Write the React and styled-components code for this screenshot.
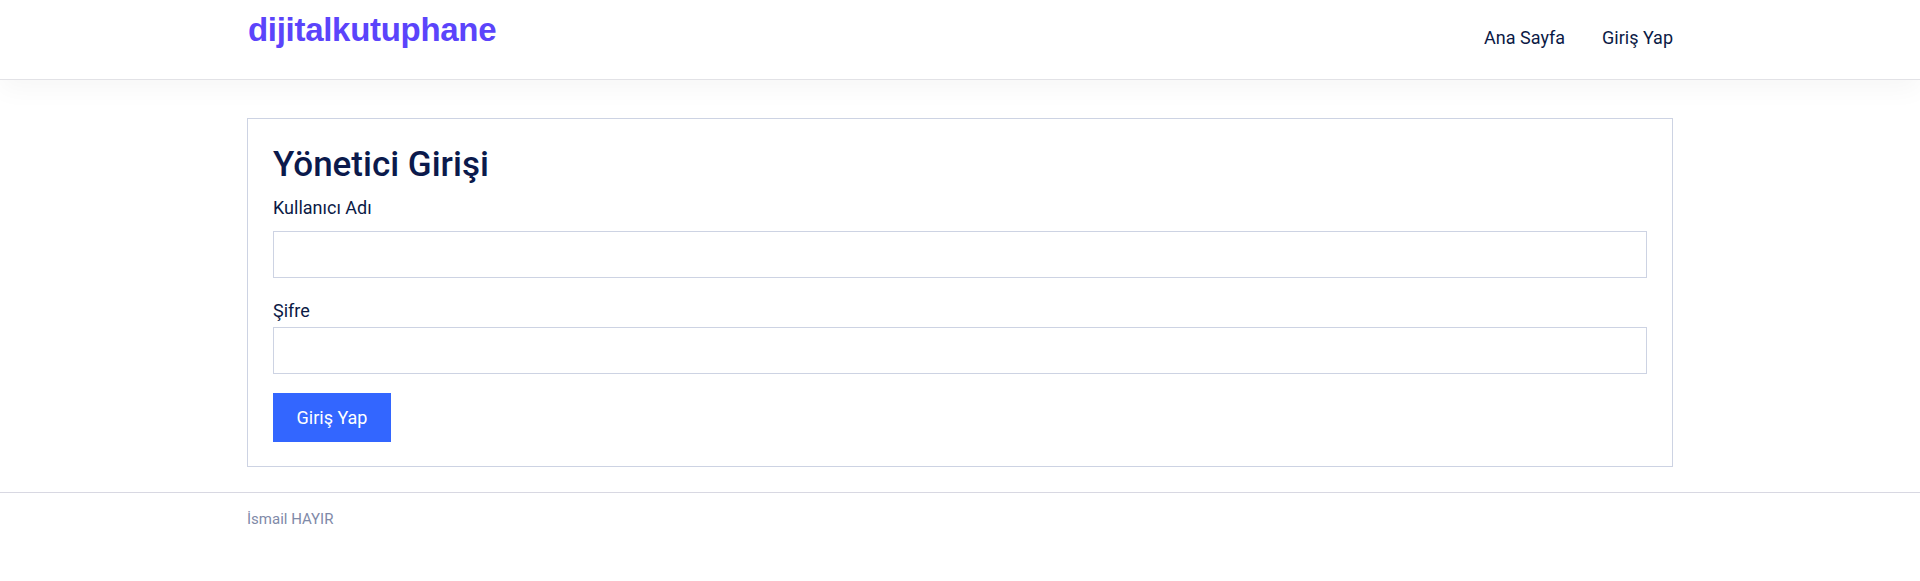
import styled, { createGlobalStyle } from 'styled-components';

const GlobalStyle = createGlobalStyle`
  * { box-sizing: border-box; }
  body {
    margin: 0;
    background: #ffffff;
    font-family: Roboto, "Noto Sans", sans-serif;
    color: #0a1a4a;
  }
`;

const Header = styled.header`
  height: 80px;
  background: #ffffff;
  border-bottom: 1px solid #e2e2e6;
  box-shadow: 0 10px 26px rgba(0, 0, 0, 0.035);
  position: relative;
`;

const Container = styled.div`
  width: 1426px;
  margin: 0 auto;
`;

const HeaderInner = styled(Container)`
  height: 100%;
  display: flex;
  justify-content: space-between;
  align-items: flex-start;
`;

const Logo = styled.a`
  font-family: "Liberation Sans", Arial, sans-serif;
  font-weight: 700;
  font-size: 33px;
  letter-spacing: -0.3px;
  color: #5b44fb;
  text-decoration: none;
  margin-top: 11px;
  margin-left: 1px;
`;

const Nav = styled.nav`
  display: flex;
  gap: 37px;
  margin-top: 27px;
`;

const NavLink = styled.a`
  font-size: 18px;
  font-weight: 400;
  color: #0b1a45;
  text-decoration: none;
`;

const Main = styled.main`
  padding-top: 38px;
  padding-bottom: 25px;
`;

const Card = styled(Container)`
  border: 1px solid #cdd3e3;
  padding: 25px 25px 24px;
  background: #ffffff;
`;

const Title = styled.h1`
  margin: 0;
  font-size: 35px;
  font-weight: 500;
  line-height: 42px;
  color: #0b1a4c;
`;

const Field = styled.div`
  margin-top: ${(p) => p.$top}px;
`;

const Label = styled.label`
  display: block;
  font-size: 18px;
  line-height: 22px;
  color: #0b1a45;
  margin-bottom: ${(p) => p.$gap}px;
`;

const Input = styled.input`
  display: block;
  width: 100%;
  height: 47px;
  border: 1px solid #cdd3e3;
  background: #ffffff;
  outline: none;
`;

const Button = styled.button`
  margin-top: 19px;
  width: 118px;
  height: 49px;
  border: none;
  background: #3366ff;
  color: #ffffff;
  font-family: Roboto, sans-serif;
  font-size: 18px;
  cursor: pointer;
`;

const Footer = styled.footer`
  border-top: 1px solid #d8d8e2;
`;

const FooterText = styled.p`
  margin: 0;
  padding-top: 17px;
  font-size: 15px;
  color: #7f8aa8;
`;

export default function App() {
  return (
    <>
      <GlobalStyle />
      <Header>
        <HeaderInner>
          <Logo href="#">dijitalkutuphane</Logo>
          <Nav>
            <NavLink href="#">Ana Sayfa</NavLink>
            <NavLink href="#">Giriş Yap</NavLink>
          </Nav>
        </HeaderInner>
      </Header>
      <Main>
        <Card as="form" onSubmit={(e) => e.preventDefault()}>
          <Title>Yönetici Girişi</Title>
          <Field $top={11}>
            <Label $gap={12}>Kullanıcı Adı</Label>
            <Input type="text" />
          </Field>
          <Field $top={22}>
            <Label $gap={5}>Şifre</Label>
            <Input type="password" />
          </Field>
          <Button type="submit">Giriş Yap</Button>
        </Card>
      </Main>
      <Footer>
        <Container>
          <FooterText>İsmail HAYIR</FooterText>
        </Container>
      </Footer>
    </>
  );
}
